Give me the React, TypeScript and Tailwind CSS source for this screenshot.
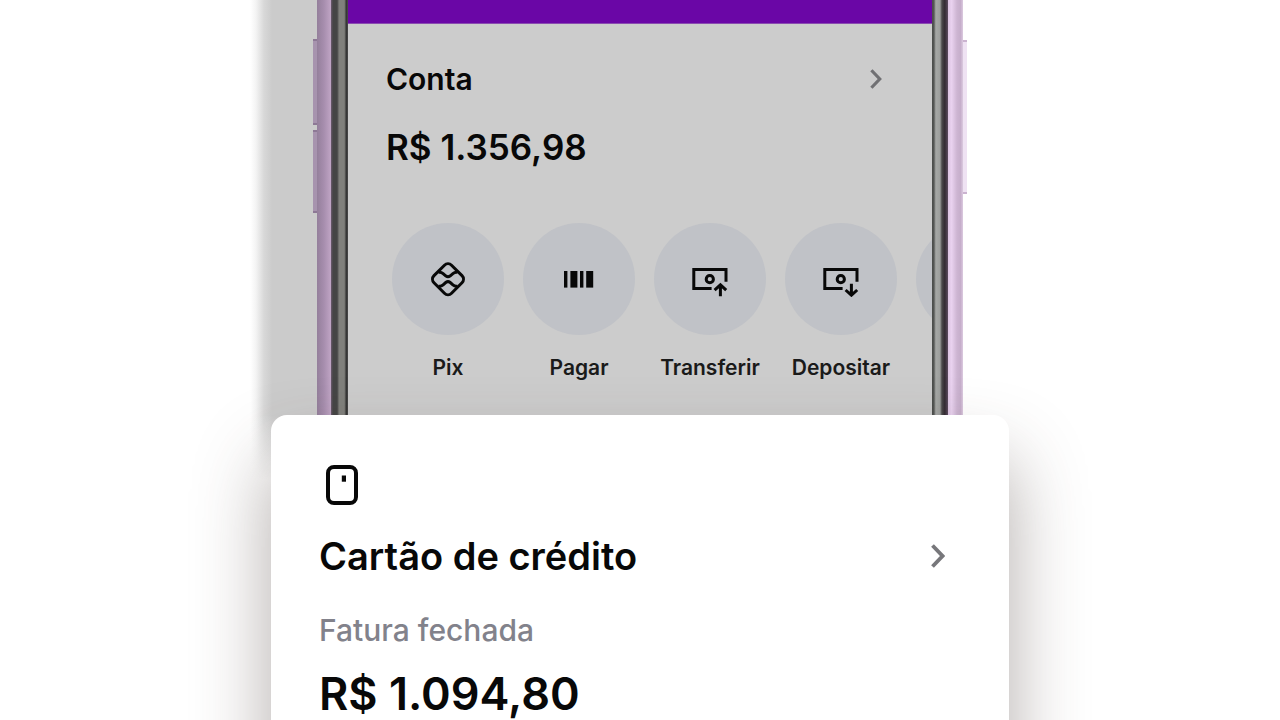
import type { ReactNode } from "react";

interface IconProps {
  children: ReactNode;
}

function ActionIcon({ children }: IconProps) {
  return (
    <svg
      className="size-9"
      viewBox="0 0 36 36"
      fill="none"
      stroke="currentColor"
      strokeWidth="3"
      aria-hidden="true"
    >
      {children}
    </svg>
  );
}

const ACTIONS: { label: string; icon: ReactNode }[] = [
  {
    label: "Pix",
    icon: (
      <ActionIcon>
        <rect x="5.6" y="5.8" width="24.8" height="24.8" rx="5" transform="rotate(45 18 18.2)" />
        <path d="M8.6 11.2h1.2c1.4 0 2.4.6 3.3 1.4l2.9 2.5q2 1.4 4 0l2.9-2.5c.9-.8 1.9-1.4 3.3-1.4h1.2" />
        <path d="M8.6 25.2h1.2c1.4 0 2.4-.6 3.3-1.4l2.9-2.5q2-1.4 4 0l2.9 2.5c.9.8 1.9 1.4 3.3 1.4h1.2" />
      </ActionIcon>
    ),
  },
  {
    label: "Pagar",
    icon: (
      <ActionIcon>
        <g fill="currentColor" stroke="none">
          <rect x="3" y="10" width="3.4" height="16.6" />
          <rect x="9.4" y="10" width="7" height="16.6" />
          <rect x="19" y="10" width="3.4" height="16.6" />
          <rect x="25.2" y="10" width="7" height="16.6" />
        </g>
      </ActionIcon>
    ),
  },
  {
    label: "Transferir",
    icon: (
      <ActionIcon>
        <path d="M34 20.8V8.4H1.8v19h17.8" />
        <circle cx="17.8" cy="18.2" r="3.6" />
        <path d="M28.4 35.2V24.2M22.6 29.2l5.8-5.4 5.8 5.4" />
      </ActionIcon>
    ),
  },
  {
    label: "Depositar",
    icon: (
      <ActionIcon>
        <path d="M34 20.8V8.4H1.8v19h17.8" />
        <circle cx="17.8" cy="18.2" r="3.6" />
        <path d="M28.4 22.8v11M22.6 29l5.8 5.2 5.8-5.2" />
      </ActionIcon>
    ),
  },
];

function Chevron({ className }: { className: string }) {
  return (
    <svg className={className} viewBox="0 0 14 24" fill="none" stroke="currentColor" strokeWidth="3.8" aria-hidden="true">
      <path d="M1.5 1.5 11.5 12l-10 10.5" />
    </svg>
  );
}

function AccountScreen() {
  return (
    <section className="flex-1 min-w-0 overflow-hidden bg-[#cccccc]">
      <div className="h-6 bg-[#6a06a6] border-b border-[#8a4bb0]" />
      <div className="px-[38px] pt-[35px]">
        <button type="button" className="flex w-full items-center justify-between pr-3">
          <span className="text-[30px] leading-10 font-semibold">Conta</span>
          <Chevron className="h-5 w-3 text-[#707073]" />
        </button>
        <p className="mt-7 text-[35px] leading-10 font-semibold">R$ 1.356,98</p>
      </div>
      {/* bottom padding runs on behind the sheet */}
      <div className="mt-14 flex gap-[19px] pl-11 pb-[97px]">
        {ACTIONS.map((action) => (
          <button key={action.label} type="button" className="flex w-28 shrink-0 flex-col items-center gap-[19px]">
            <span className="flex size-28 items-center justify-center rounded-full bg-[#c0c2c7]">{action.icon}</span>
            <span className="text-[21px] leading-7 font-semibold text-[#1a1a1a]">{action.label}</span>
          </button>
        ))}
        {/* next action, clipped by the bezel */}
        <span className="size-28 shrink-0 rounded-full bg-[#c0c2c7]" />
      </div>
    </section>
  );
}

function Phone() {
  return (
    <div className="-mb-16 flex justify-center">
      {/* dimmed strip beside the phone, fading out behind the sheet */}
      <div className="w-[68px] bg-[linear-gradient(to_top,#ffffff,transparent_64px),linear-gradient(to_right,#ffffff_2%,#f4f4f4_10%,#d8d8d8_22%,#cbcbcb_34%)]" />
      <div className="relative flex w-[646px]">
        <div className="absolute -left-1 top-[39px] h-[86px] w-1 border-y-2 border-[#8d7895] bg-[#a793ae]" />
        <div className="absolute -left-1 top-[130px] h-[83px] w-1 border-y-2 border-[#8d7895] bg-[#a793ae]" />
        <div className="w-[14px] bg-linear-to-r from-[#947f9b] via-[#a78eae] to-[#c0a5c5]" />
        <div className="w-[17px] bg-[linear-gradient(90deg,#6b5a6e_0%,#454545_12%,#454545_36%,#80807c_48%,#80807c_78%,#333333_90%,#4c4c4c_100%)]" />
        <AccountScreen />
        <div className="w-4 bg-[linear-gradient(90deg,#4a4c4a_0%,#555755_12%,#a6a8a6_24%,#9c9e9c_50%,#4b494b_62%,#332b33_80%,#5d4c60_100%)]" />
        <div className="w-[15px] bg-[linear-gradient(90deg,#dcc3e2_0%,#e9d2ef_24%,#cdb5d2_60%,#c6aecb_84%,#dccbe0_100%)]" />
        <div className="absolute -right-1 top-10 h-[154px] w-1 border-y-2 border-[#cbb3d0] bg-[#efe2f3]" />
      </div>
      <div className="w-[68px]" />
    </div>
  );
}

function CreditCardSheet() {
  return (
    <section className="relative mx-auto w-full max-w-[738px] rounded-t-2xl bg-white px-12 pt-[50px] pb-36 shadow-[0_45px_76px_rgba(70,56,50,0.42)]">
      <svg className="ml-[7px] h-10 w-8" viewBox="0 0 32 40" fill="none" aria-hidden="true">
        <rect x="2" y="2" width="28" height="36" rx="6" stroke="currentColor" strokeWidth="4" />
        <rect x="15.8" y="10.5" width="4.2" height="6.2" fill="currentColor" />
      </svg>
      <button type="button" className="mt-[27px] flex w-full items-center justify-between pr-4">
        <span className="text-[38px] leading-12 font-semibold">Cartão de crédito</span>
        <Chevron className="h-6 w-[14px] text-[#77777b]" />
      </button>
      <p className="mt-[30px] text-[30px] leading-10 font-medium text-[#82828b]">Fatura fechada</p>
      <p className="mt-5 text-[45px] leading-12 font-semibold">R$ 1.094,80</p>
    </section>
  );
}

export default function App() {
  return (
    <main className="h-screen overflow-hidden bg-white font-['Inter',sans-serif] text-[#080808]">
      <Phone />
      <CreditCardSheet />
    </main>
  );
}
